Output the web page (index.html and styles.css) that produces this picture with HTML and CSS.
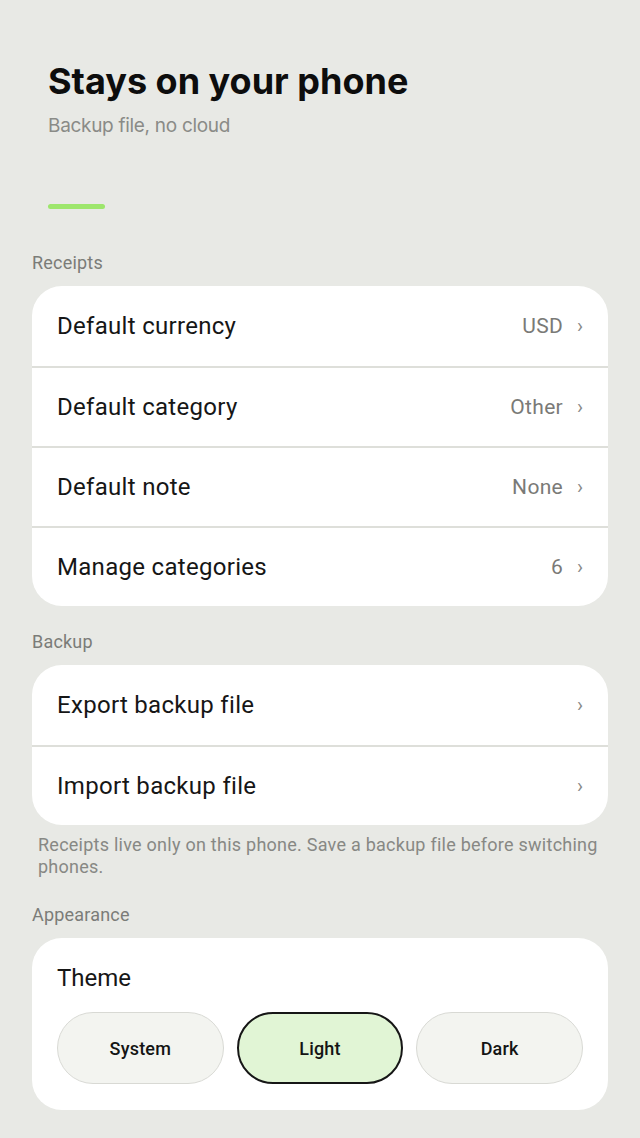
FILE: index.html
```html
<!DOCTYPE html>
<html lang="en">
<head>
<meta charset="utf-8">
<title>Settings</title>
<link rel="stylesheet" href="styles.css">
</head>
<body>
<div class="page">
  <header class="hero">
    <h1 class="hero-title">Stays on your phone</h1>
    <p class="hero-sub">Backup file, no cloud</p>
    <div class="hero-bar"></div>
  </header>

  <section class="group">
    <h2 class="group-label">Receipts</h2>
    <div class="card">
      <div class="row"><span class="row-label">Default currency</span><span class="row-value">USD</span><span class="chev">›</span></div>
      <div class="row"><span class="row-label">Default category</span><span class="row-value">Other</span><span class="chev">›</span></div>
      <div class="row"><span class="row-label">Default note</span><span class="row-value">None</span><span class="chev">›</span></div>
      <div class="row"><span class="row-label">Manage categories</span><span class="row-value">6</span><span class="chev">›</span></div>
    </div>
  </section>

  <section class="group">
    <h2 class="group-label">Backup</h2>
    <div class="card">
      <div class="row"><span class="row-label">Export backup file</span><span class="chev">›</span></div>
      <div class="row"><span class="row-label">Import backup file</span><span class="chev">›</span></div>
    </div>
    <p class="note">Receipts live only on this phone. Save a backup file before switching phones.</p>
  </section>

  <section class="group group-last">
    <h2 class="group-label">Appearance</h2>
    <div class="card card-theme">
      <div class="theme-title">Theme</div>
      <div class="seg">
        <button class="seg-btn">System</button>
        <button class="seg-btn active">Light</button>
        <button class="seg-btn">Dark</button>
      </div>
    </div>
  </section>
</div>
</body>
</html>
```

FILE: styles.css
```css
* { box-sizing: border-box; }
html, body { margin: 0; padding: 0; }
body {
  background: #e8e9e5;
  font-family: Roboto, "Noto Sans", sans-serif;
  color: #141414;
}
.page {
  padding: 0 32px 28px;
}
.hero {
  padding: 59px 16px 0;
}
.hero-title {
  margin: 0;
  font-family: Inter, sans-serif;
  font-weight: 700;
  font-size: 36px;
  line-height: 44px;
  letter-spacing: 0;
  color: #0d0d0d;
}
.hero-sub {
  margin: 11px 0 0;
  font-family: Inter, sans-serif;
  font-size: 19px;
  line-height: 24px;
  color: #8a8b87;
  letter-spacing: -0.3px;
}
.hero-bar {
  margin-top: 66px;
  width: 57px;
  height: 5px;
  border-radius: 3px;
  background: #9de66c;
}
.group { margin-top: 42px; }
.group + .group { margin-top: 24px; }
.group.group-last { margin-top: 25px; }
.group-label {
  margin: 0 0 11px;
  font-size: 18px;
  line-height: 24px;
  font-weight: 400;
  letter-spacing: 0.2px;
  color: #7b7c78;
}
.card {
  background: #ffffff;
  border-radius: 30px;
  overflow: hidden;
}
.row {
  display: flex;
  align-items: center;
  height: 80px;
  padding: 0 25px;
  border-top: 2px solid #dedfda;
}
.row:first-child { border-top: none; }
.row-label {
  flex: 1;
  font-size: 24px;
  letter-spacing: 0.3px;
  color: #161616;
}
.row-value {
  font-size: 21px;
  letter-spacing: 0.3px;
  color: #7a7a77;
  margin-right: 12px;
}
.chev {
  font-size: 20px;
  color: #8a8a87;
  width: 8px;
  text-align: right;
}
.note {
  margin: 9px 0 0;
  padding: 0 6px;
  font-size: 18px;
  line-height: 22px;
  letter-spacing: 0.25px;
  color: #878884;
}
.card-theme {
  margin-top: 1px;
  padding: 26px 25px 26px;
}
.theme-title {
  font-size: 24px;
  line-height: 28px;
  color: #161616;
}
.seg {
  margin-top: 20px;
  display: grid;
  grid-template-columns: repeat(3, 1fr);
  gap: 13px;
}
.seg-btn {
  height: 72px;
  border-radius: 36px;
  border: 1.5px solid #d8d9d4;
  background: #f3f4f0;
  font-family: Roboto, sans-serif;
  font-size: 18px;
  font-weight: 500;
  letter-spacing: 0.2px;
  color: #141414;
  padding: 0;
}
.seg-btn.active {
  background: #e1f5d5;
  border: 2px solid #161616;
}
```
